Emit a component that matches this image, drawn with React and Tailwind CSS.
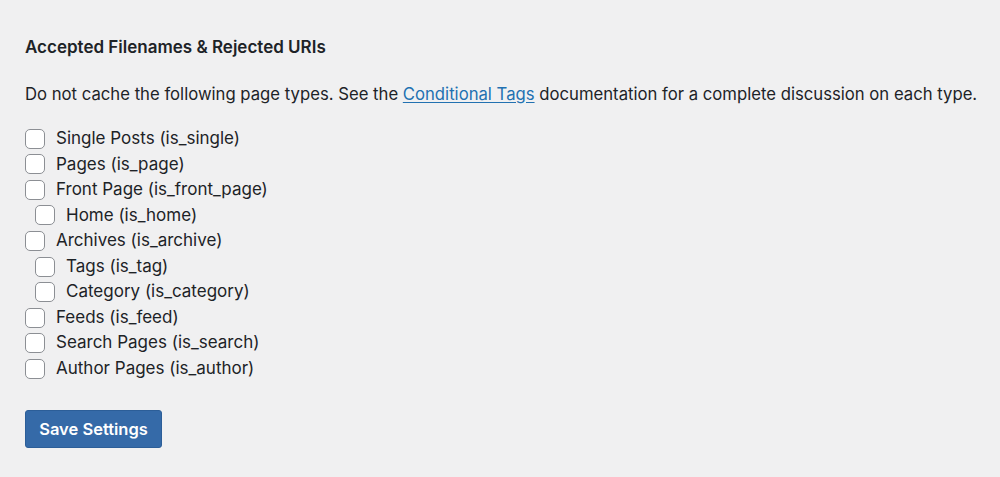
import React, { useState } from 'react';

const pageTypes = [
  { id: 'single', label: 'Single Posts (is_single)', nested: false },
  { id: 'page', label: 'Pages (is_page)', nested: false },
  { id: 'front', label: 'Front Page (is_front_page)', nested: false },
  { id: 'home', label: 'Home (is_home)', nested: true },
  { id: 'archive', label: 'Archives (is_archive)', nested: false },
  { id: 'tag', label: 'Tags (is_tag)', nested: true },
  { id: 'category', label: 'Category (is_category)', nested: true },
  { id: 'feed', label: 'Feeds (is_feed)', nested: false },
  { id: 'search', label: 'Search Pages (is_search)', nested: false },
  { id: 'author', label: 'Author Pages (is_author)', nested: false },
];

const App = () => {
  const [checked, setChecked] = useState({});

  const toggle = (id) => setChecked({ ...checked, [id]: !checked[id] });

  return (
    <div className="min-h-screen w-full bg-[#f0f0f1] px-[25px] pt-[37px] text-[#1d2327] font-['Inter','Liberation_Sans',sans-serif]">
      {/* Section heading */}
      <h2 className="text-[17px] font-semibold leading-[20px]">Accepted Filenames &amp; Rejected URIs</h2>

      <p className="mt-[25px] whitespace-nowrap text-[16.7px] leading-[24px]">
        Do not cache the following page types. See the{' '}
        <a href="#" className="text-[#2271b1] underline underline-offset-2">Conditional Tags</a>{' '}
        documentation for a complete discussion on each type.
      </p>

      {/* Page type checkboxes */}
      <div className="mt-[20px] flex flex-col">
        {pageTypes.map((t) => (
          <label
            key={t.id}
            className={`flex h-[25.55px] items-center gap-[11px] text-[17px] ${t.nested ? 'pl-[10px]' : ''}`}
          >
            <input
              type="checkbox"
              checked={!!checked[t.id]}
              onChange={() => toggle(t.id)}
              className="h-[20px] w-[20px] appearance-none rounded-[5px] border border-[#8c8f94] bg-white checked:bg-[#2271b1]"
            />
            <span>{t.label}</span>
          </label>
        ))}
      </div>

      <button className="mt-[29px] h-[38px] w-[137px] rounded-[3px] border border-[#2c5e98] bg-[#356aa8] text-[16.5px] font-semibold text-white">
        Save Settings
      </button>
    </div>
  );
};

export default App;
